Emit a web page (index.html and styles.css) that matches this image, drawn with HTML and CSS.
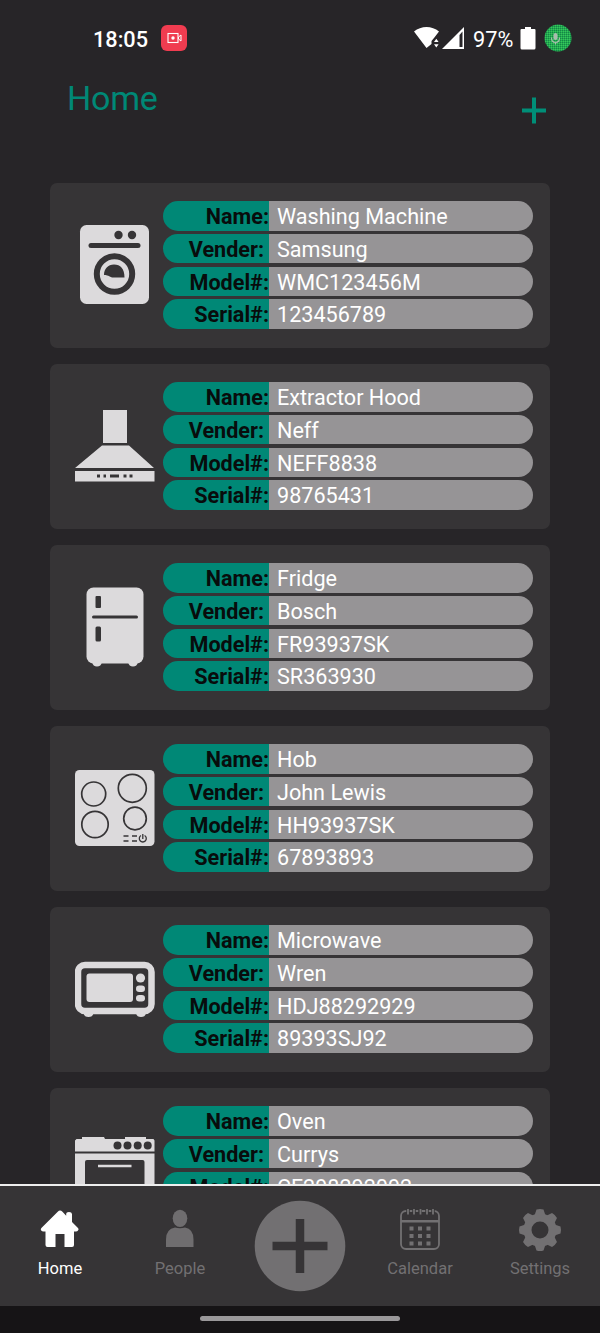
FILE: index.html
```html
<!DOCTYPE html>
<html lang="en">
<head>
<meta charset="utf-8">
<title>Home</title>
<link rel="stylesheet" href="styles.css">
</head>
<body>
<div class="app">
  <header class="status">
    <span class="clock">18:05</span>
    <svg class="rec" viewBox="0 0 26 26"><rect width="26" height="26" rx="6" fill="#f03c50"/><rect x="7" y="8.5" width="10" height="9" fill="none" stroke="#fff" stroke-width="1.1"/><circle cx="12" cy="13" r="1.700" fill="#fff"/><path d="M17.500 12l2.500-2v6l-2.500-2z" fill="none" stroke="#fff"/></svg>
    <svg class="signals" viewBox="0 0 52 24"><path d="M0 5.5C7-.6 18-.6 25 5.5l-5 6.500-2.500 3v3L12.500 22Z" fill="#fff"/><path d="M20 16l2.300-3.300L24.600 16zM20 18.200h4.600L22.300 21.500z" fill="#fff"/><path d="M28 23L50 1v22z" fill="#fff"/><path d="M45.500 9L48.500 5.500V21h-3z" fill="#272528"/></svg>
    <span class="percent">97%</span>
    <svg class="battery" viewBox="0 0 16 24"><path d="M5 1h6v2h3.500q1 0 1 1V22q0 1.500-1.500 1.500H2Q.5 23.500.5 22V4q0-1 1-1H5z" fill="#fff"/></svg>
    <svg class="mic" viewBox="0 0 28 28"><defs><pattern id="dots" width="2" height="2" patternUnits="userSpaceOnUse"><rect width="2" height="2" fill="#22ad50"/><rect width="1" height="1" fill="#168447"/><rect x="1" y="1" width="1" height="1" fill="#38c45c"/></pattern></defs><circle cx="14" cy="14" r="13.500" fill="url(#dots)"/><rect x="9.500" y="9" width="4" height="7" rx="2" fill="#a9bcae"/><path d="M7.500 13.500q0 5 4 5t4-5M11.500 18.500v2" fill="none" stroke="#a9bcae" stroke-width="1.200"/></svg>
  </header>
  <div class="heading">
    <h1 class="title">Home</h1>
    <svg class="add" viewBox="0 0 24 27"><path d="M12 .5v26M0 13.500h24" stroke="#008f78" stroke-width="4"/></svg>
  </div>
  <main class="list">
    <article class="card">
      <svg class="pic" viewBox="0 0 80 80"><rect x="5" y="0" width="69" height="79" rx="6.500" fill="#dcdadc"/><g fill="#363436"><circle cx="43.500" cy="10" r="4.200"/><circle cx="57" cy="10" r="4.200"/><rect x="13.500" y="18" width="52" height="5" rx="2.500"/><path d="M29 50c0-6 4-10.500 10-10.500 6.500 0 10.500 4 10.500 13H38c-3 0-4-2.500-9-2.500z"/></g><circle cx="39.500" cy="49" r="17.700" fill="none" stroke="#363436" stroke-width="6"/></svg>
      <dl class="rows"><dt>Name:</dt><dd>Washing Machine</dd><dt class="inset">Vender:</dt><dd>Samsung</dd><dt>Model#:</dt><dd>WMC123456M</dd><dt>Serial#:</dt><dd>123456789</dd></dl>
    </article>
    <article class="card">
      <svg class="pic" viewBox="0 0 80 80"><path d="M28 4h24v33H28zM27 39.500h27l25 22.500H0zM0 65h79.500v10.500H0z" fill="#dcdadc"/><path d="M22 68.500h3v3h-3zM28.500 68.500h2.500v3h-2.500zM35 68.500h9v3h-9zM48.500 68.500h3v3h-3zM54.500 68.500h3v3h-3z" fill="#363436"/></svg>
      <dl class="rows"><dt>Name:</dt><dd>Extractor Hood</dd><dt class="inset">Vender:</dt><dd>Neff</dd><dt>Model#:</dt><dd>NEFF8838</dd><dt>Serial#:</dt><dd>98765431</dd></dl>
    </article>
    <article class="card">
      <svg class="pic" viewBox="0 0 80 80"><rect x="11.500" y=".5" width="57" height="76" rx="7" fill="#dcdadc"/><path d="M17 75h10q-1 4.500-5 4.500T17 75zM53 75h10q-1 4.500-5 4.500T53 75z" fill="#dcdadc"/><g fill="#363436"><rect x="20.500" y="9" width="5.500" height="12" rx="1"/><rect x="17" y="28.500" width="46" height="3" rx="1.500"/><rect x="20.500" y="39.500" width="5.500" height="15" rx="1.500"/></g></svg>
      <dl class="rows"><dt>Name:</dt><dd>Fridge</dd><dt class="inset">Vender:</dt><dd>Bosch</dd><dt>Model#:</dt><dd>FR93937SK</dd><dt>Serial#:</dt><dd>SR363930</dd></dl>
    </article>
    <article class="card">
      <svg class="pic" viewBox="0 0 80 80"><rect y="2" width="79.500" height="76" rx="4.500" fill="#dcdadc"/><g fill="none" stroke="#363436" stroke-width="1.700"><circle cx="18.700" cy="26" r="12"/><circle cx="57.300" cy="20.300" r="14"/><circle cx="20" cy="56.500" r="13.200"/><circle cx="60" cy="50.500" r="11.300"/><path d="M48.500 68h5M48.500 73h5M57 68h5M57 73h5M66 67.500a3.500 3.500 0 1 0 3.600 0M67.800 66v5" stroke-width="1.300"/></g></svg>
      <dl class="rows"><dt>Name:</dt><dd>Hob</dd><dt class="inset">Vender:</dt><dd>John Lewis</dd><dt>Model#:</dt><dd>HH93937SK</dd><dt>Serial#:</dt><dd>67893893</dd></dl>
    </article>
    <article class="card">
      <svg class="pic" viewBox="0 0 80 80"><rect x="3" y="16" width="73.500" height="46" rx="7" fill="none" stroke="#dcdadc" stroke-width="6.500"/><rect x="11.500" y="24.500" width="46.500" height="28.500" rx="3" fill="#dcdadc"/><circle cx="65.500" cy="29" r="4.600" fill="#dcdadc"/><rect x="61" y="36.500" width="9" height="6.500" rx="3.200" fill="#dcdadc"/><rect x="61" y="46" width="9" height="6.500" rx="3.200" fill="#dcdadc"/><path d="M8.500 64.500h10q-1 3.500-5 3.500t-5-3.500zM61 64.500h10q-1 3.500-5 3.500t-5-3.500z" fill="#dcdadc"/></svg>
      <dl class="rows"><dt>Name:</dt><dd>Microwave</dd><dt class="inset">Vender:</dt><dd>Wren</dd><dt>Model#:</dt><dd>HDJ88292929</dd><dt>Serial#:</dt><dd>89393SJ92</dd></dl>
    </article>
    <article class="card">
      <svg class="pic" viewBox="0 0 80 80"><path d="M1.500 9H7V7h22l1 2h20V7h21v2h7.500l1 1.500V21.500H0V10.500zM0 23.500h79.500V80H0z" fill="#dcdadc"/><g fill="#363436"><circle cx="42.500" cy="15.500" r="4"/><circle cx="52.500" cy="15.500" r="4"/><circle cx="62.700" cy="15.500" r="4"/><circle cx="72.700" cy="15.500" r="4"/><rect x="10" y="30" width="59.500" height="40" rx="2"/></g><path d="M23 36h33.500" stroke="#dcdadc" stroke-width="2.500"/></svg>
      <dl class="rows"><dt>Name:</dt><dd>Oven</dd><dt class="inset">Vender:</dt><dd>Currys</dd><dt>Model#:</dt><dd>CF298292092</dd></dl>
    </article>
  </main>
  <nav class="tabs">
    <a class="tab active"><svg class="icon" viewBox="0 0 42 42"><path d="M21 1.500q1.300 0 2.200 1l4 4.200V5q0-2 2.800-2t3 2v8l6 6q1.200 1.300 0 2.500-.7 1-2 1H35V36q0 2-2 2h-7.500V25h-9v13H8.500q-2 0-2-2V22.500H4.500q-1.500 0-2.300-1-1-1.200.2-2.500L19 2.500q.8-1 2-1z" fill="#fff"/></svg><span>Home</span></a>
    <a class="tab"><svg class="icon" viewBox="0 0 42 42"><ellipse cx="21" cy="9.300" rx="7.300" ry="8.600" fill="#6f6d6f"/><path d="M7 38V30.500Q7 20 16 18.500q5 1.500 10 0Q34.500 20 34.500 30.500V38z" fill="#6f6d6f"/></svg><span>People</span></a>
    <a class="plus"><svg class="disc" viewBox="0 0 92 92"><circle cx="46" cy="46" r="45.300" fill="#727072"/><path d="M46 19v54M18.500 46h55" stroke="#363436" stroke-width="8.500"/></svg></a>
    <a class="tab"><svg class="icon" viewBox="0 0 42 42"><g fill="none" stroke="#727072" stroke-width="1.800"><rect x="2" y="2" width="38" height="38" rx="5"/><path d="M2 12.300h38" stroke-width="2.500"/></g><path d="M9-.5v5M15-.5v5M21-.5v5M28-.5v5M34-.5v5" stroke="#363436" stroke-width="3.500"/><path d="M9 0v5.500M15 0v5.500M21.500 0v5.500M28 0v5.500M34 0v5.500" stroke="#727072" stroke-width="1.800"/><path d="M10.500 19.500h4M19 19.500h4M27.500 19.500h4M10.500 27h4M19 27h4M27.500 27h4M10.500 34.500h4M19 34.500h4M27.500 34.500h4" stroke="#727072" stroke-width="4"/></svg><span>Calendar</span></a>
    <a class="tab"><svg class="icon" viewBox="0 0 42 42"><circle cx="21" cy="21" r="12.500" fill="none" stroke="#727072" stroke-width="8"/><path d="M15.500 6.500L17.500.5q3.500-1 7 0l2 6zM15.500 35.500l2 6q3.500 1 7 0l2-6zM6.500 15.500l-6 2q-1 3.500 0 7l6 2zM35.500 15.500l6 2q1 3.500 0 7l-6 2z" fill="#727072"/><path transform="rotate(45 21 21)" d="M15.500 6.500L17.500.5q3.500-1 7 0l2 6zM15.500 35.500l2 6q3.500 1 7 0l2-6zM6.500 15.500l-6 2q-1 3.500 0 7l6 2zM35.500 15.500l6 2q1 3.500 0 7l-6 2z" fill="#727072"/></svg><span>Settings</span></a>
  </nav>
  <footer class="gesture"><div class="pill"></div></footer>
</div>
</body>
</html>
```
FILE: styles.css
```css
* { box-sizing: border-box; }
body { margin: 0; background: #272528; font-family: Roboto, sans-serif; }
.app { width: 600px; height: 1333px; display: flex; flex-direction: column; overflow: hidden; }
.status { height: 78px; flex: none; display: flex; align-items: center; padding: 0 28px 2px 93px; color: #fff; }
.clock { width: 68px; font-size: 21.700px; font-weight: 500; line-height: 28px; padding-top: 3px; }
.rec { width: 26px; height: 26px; margin-right: auto; }
.signals { width: 52px; height: 24px; }
.percent { width: 41px; margin: 0 6px 0 7px; font-size: 21.700px; line-height: 28px; padding-top: 3px; white-space: nowrap; }
.battery { width: 16px; height: 24px; margin-right: 8px; }
.mic { width: 28px; height: 28px; }
.heading { height: 105px; flex: none; display: flex; justify-content: space-between; padding: 0 54px 0 67px; }
.title { margin: 0; font-size: 34px; font-weight: 400; line-height: 41px; color: #008876; letter-spacing: -0.2px; }
.add { width: 24px; height: 27px; margin-top: 19px; }
.list { flex: 1; min-height: 0; overflow: hidden; padding: 0 50px; display: flex; flex-direction: column; gap: 16px; }
.card { height: 165px; flex: none; display: flex; align-items: flex-start; border-radius: 7px; background: #363436; padding: 18px 17px 0 25px; }
.pic { width: 80px; height: 80px; margin: 24px 8px 0 0; flex: none; }
.rows { flex: 1; margin: 0; display: grid; grid-template-columns: 106px 1fr; grid-auto-rows: 29.7px; row-gap: 3.100px; font-size: 21.600px; line-height: 32px; }
.rows dt { background: #008876; border-radius: 15px 0 0 15px; color: #080c0c; font-weight: 700; text-align: right; white-space: nowrap; }
.rows .inset { padding-right: 5px; }
.rows dd { margin: 0; padding-left: 8px; background: #969496; border-radius: 0 15px 15px 0; color: #fff; }
.tabs { height: 122px; flex: none; display: grid; grid-template-columns: repeat(5, 1fr); background: #363436; border-top: 2px solid #eee; }
.tab { display: flex; flex-direction: column; align-items: center; padding-top: 23px; font-size: 16.500px; line-height: 21px; color: #727072; }
.icon { width: 42px; height: 42px; margin-bottom: 7px; overflow: visible; }
.active { color: #fff; }
.plus { display: flex; justify-content: center; padding-top: 14px; }
.disc { width: 92px; height: 92px; }
.gesture { height: 27px; flex: none; background: #161416; padding-top: 10px; }
.pill { width: 200px; height: 5px; margin: 0 auto; border-radius: 3px; background: #9a989a; }
```
